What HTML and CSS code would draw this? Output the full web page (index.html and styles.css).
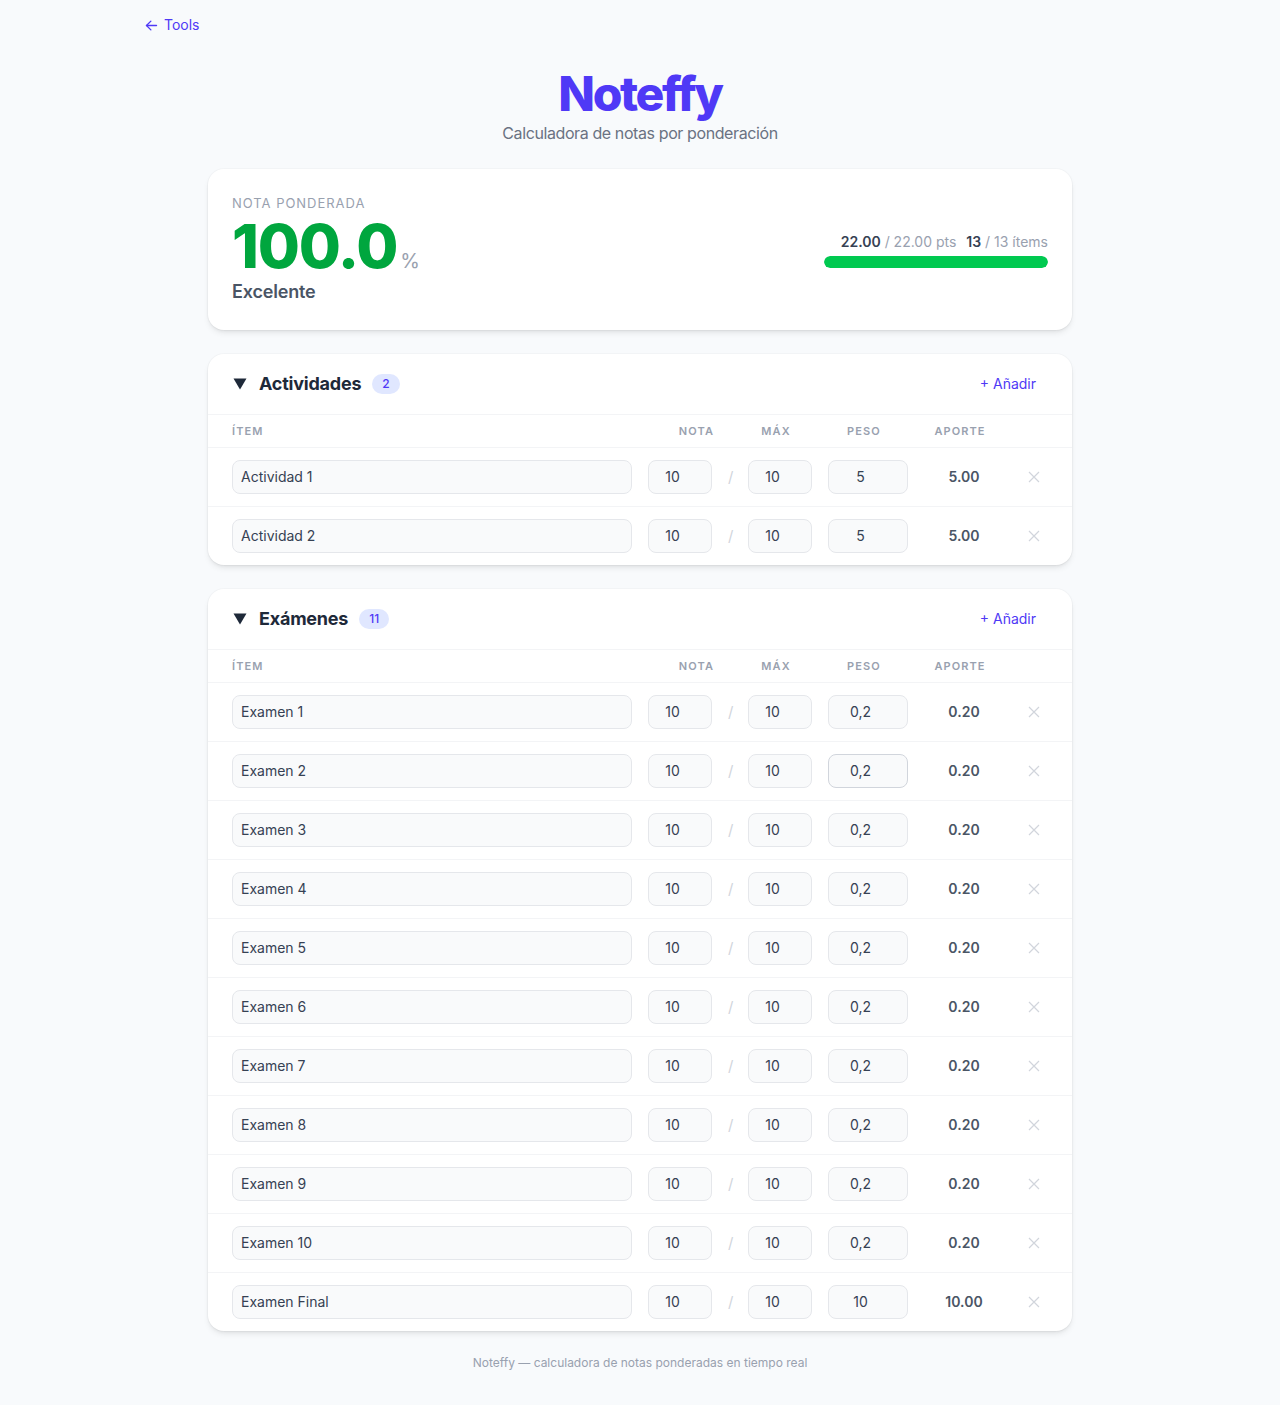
FILE: index.html
```html
<!DOCTYPE html>
<html lang="es">
<head>
    <meta charset="UTF-8">
    <meta name="viewport" content="width=device-width, initial-scale=1.0">
    <title>Noteffy - Calculadora de notas</title>
    <link rel="stylesheet" href="styles.css">
</head>
<body>
    <nav class="top-nav">
        <a href="/" class="back-link">
            <svg width="15" height="15" viewBox="0 0 24 24" fill="none" stroke="currentColor" stroke-width="2.2" stroke-linecap="round" stroke-linejoin="round"><path d="M20 12H4"/><path d="M11 19l-7-7 7-7"/></svg>
            Tools
        </a>
    </nav>

    <main class="app">
        <header class="app-header">
            <h1>Noteffy</h1>
            <p>Calculadora de notas por ponderación</p>
        </header>

        <!-- Resultado global -->
        <section class="card summary">
            <div class="summary-main">
                <div class="summary-label">Nota ponderada</div>
                <div class="summary-score">
                    <span class="score-value">100.0</span>
                    <span class="score-unit">%</span>
                </div>
                <div class="summary-grade">Excelente</div>
            </div>
            <div class="summary-progress">
                <div class="progress-text">
                    <b>22.00</b> / 22.00 pts <span class="gap"></span><b>13</b> / 13 ítems
                </div>
                <div class="progress-track">
                    <div class="progress-fill" style="width: 100%"></div>
                </div>
            </div>
        </section>

        <!-- Actividades -->
        <section class="card group">
            <div class="group-head">
                <button class="group-toggle">
                    <svg class="caret" width="14" height="12" viewBox="0 0 14 12"><path d="M0.5 0.5h13L7 11.5z" fill="currentColor"/></svg>
                    <h2>Actividades</h2>
                    <span class="badge">2</span>
                </button>
                <button class="add-btn">+ Añadir</button>
            </div>
            <div class="row row-head">
                <span class="col-name">Ítem</span>
                <span class="col-num col-nota">Nota</span>
                <span class="col-slash"></span>
                <span class="col-num">Máx</span>
                <span class="col-peso">Peso</span>
                <span class="col-aporte">Aporte</span>
                <span class="col-del"></span>
            </div>
            <div class="row">
                <input class="field col-name" value="Actividad 1">
                <input class="field num col-num" value="10">
                <span class="col-slash">/</span>
                <input class="field num col-num" value="10">
                <input class="field num col-peso" value="5">
                <span class="col-aporte value">5.00</span>
                <button class="col-del remove"><svg width="12" height="12" viewBox="0 0 12 12"><path d="M1 1l10 10M11 1L1 11" stroke="currentColor" stroke-width="1.2"/></svg></button>
            </div>
            <div class="row">
                <input class="field col-name" value="Actividad 2">
                <input class="field num col-num" value="10">
                <span class="col-slash">/</span>
                <input class="field num col-num" value="10">
                <input class="field num col-peso" value="5">
                <span class="col-aporte value">5.00</span>
                <button class="col-del remove"><svg width="12" height="12" viewBox="0 0 12 12"><path d="M1 1l10 10M11 1L1 11" stroke="currentColor" stroke-width="1.2"/></svg></button>
            </div>
        </section>

        <!-- Exámenes -->
        <section class="card group">
            <div class="group-head">
                <button class="group-toggle">
                    <svg class="caret" width="14" height="12" viewBox="0 0 14 12"><path d="M0.5 0.5h13L7 11.5z" fill="currentColor"/></svg>
                    <h2>Exámenes</h2>
                    <span class="badge">11</span>
                </button>
                <button class="add-btn">+ Añadir</button>
            </div>
            <div class="row row-head">
                <span class="col-name">Ítem</span>
                <span class="col-num col-nota">Nota</span>
                <span class="col-slash"></span>
                <span class="col-num">Máx</span>
                <span class="col-peso">Peso</span>
                <span class="col-aporte">Aporte</span>
                <span class="col-del"></span>
            </div>
            <div class="row">
                <input class="field col-name" value="Examen 1">
                <input class="field num col-num" value="10">
                <span class="col-slash">/</span>
                <input class="field num col-num" value="10">
                <input class="field num col-peso" value="0,2">
                <span class="col-aporte value">0.20</span>
                <button class="col-del remove"><svg width="12" height="12" viewBox="0 0 12 12"><path d="M1 1l10 10M11 1L1 11" stroke="currentColor" stroke-width="1.2"/></svg></button>
            </div>
            <div class="row">
                <input class="field col-name" value="Examen 2">
                <input class="field num col-num" value="10">
                <span class="col-slash">/</span>
                <input class="field num col-num" value="10">
                <input class="field num col-peso hovered" value="0,2">
                <span class="col-aporte value">0.20</span>
                <button class="col-del remove"><svg width="12" height="12" viewBox="0 0 12 12"><path d="M1 1l10 10M11 1L1 11" stroke="currentColor" stroke-width="1.2"/></svg></button>
            </div>
            <div class="row">
                <input class="field col-name" value="Examen 3">
                <input class="field num col-num" value="10">
                <span class="col-slash">/</span>
                <input class="field num col-num" value="10">
                <input class="field num col-peso" value="0,2">
                <span class="col-aporte value">0.20</span>
                <button class="col-del remove"><svg width="12" height="12" viewBox="0 0 12 12"><path d="M1 1l10 10M11 1L1 11" stroke="currentColor" stroke-width="1.2"/></svg></button>
            </div>
            <div class="row">
                <input class="field col-name" value="Examen 4">
                <input class="field num col-num" value="10">
                <span class="col-slash">/</span>
                <input class="field num col-num" value="10">
                <input class="field num col-peso" value="0,2">
                <span class="col-aporte value">0.20</span>
                <button class="col-del remove"><svg width="12" height="12" viewBox="0 0 12 12"><path d="M1 1l10 10M11 1L1 11" stroke="currentColor" stroke-width="1.2"/></svg></button>
            </div>
            <div class="row">
                <input class="field col-name" value="Examen 5">
                <input class="field num col-num" value="10">
                <span class="col-slash">/</span>
                <input class="field num col-num" value="10">
                <input class="field num col-peso" value="0,2">
                <span class="col-aporte value">0.20</span>
                <button class="col-del remove"><svg width="12" height="12" viewBox="0 0 12 12"><path d="M1 1l10 10M11 1L1 11" stroke="currentColor" stroke-width="1.2"/></svg></button>
            </div>
            <div class="row">
                <input class="field col-name" value="Examen 6">
                <input class="field num col-num" value="10">
                <span class="col-slash">/</span>
                <input class="field num col-num" value="10">
                <input class="field num col-peso" value="0,2">
                <span class="col-aporte value">0.20</span>
                <button class="col-del remove"><svg width="12" height="12" viewBox="0 0 12 12"><path d="M1 1l10 10M11 1L1 11" stroke="currentColor" stroke-width="1.2"/></svg></button>
            </div>
            <div class="row">
                <input class="field col-name" value="Examen 7">
                <input class="field num col-num" value="10">
                <span class="col-slash">/</span>
                <input class="field num col-num" value="10">
                <input class="field num col-peso" value="0,2">
                <span class="col-aporte value">0.20</span>
                <button class="col-del remove"><svg width="12" height="12" viewBox="0 0 12 12"><path d="M1 1l10 10M11 1L1 11" stroke="currentColor" stroke-width="1.2"/></svg></button>
            </div>
            <div class="row">
                <input class="field col-name" value="Examen 8">
                <input class="field num col-num" value="10">
                <span class="col-slash">/</span>
                <input class="field num col-num" value="10">
                <input class="field num col-peso" value="0,2">
                <span class="col-aporte value">0.20</span>
                <button class="col-del remove"><svg width="12" height="12" viewBox="0 0 12 12"><path d="M1 1l10 10M11 1L1 11" stroke="currentColor" stroke-width="1.2"/></svg></button>
            </div>
            <div class="row">
                <input class="field col-name" value="Examen 9">
                <input class="field num col-num" value="10">
                <span class="col-slash">/</span>
                <input class="field num col-num" value="10">
                <input class="field num col-peso" value="0,2">
                <span class="col-aporte value">0.20</span>
                <button class="col-del remove"><svg width="12" height="12" viewBox="0 0 12 12"><path d="M1 1l10 10M11 1L1 11" stroke="currentColor" stroke-width="1.2"/></svg></button>
            </div>
            <div class="row">
                <input class="field col-name" value="Examen 10">
                <input class="field num col-num" value="10">
                <span class="col-slash">/</span>
                <input class="field num col-num" value="10">
                <input class="field num col-peso" value="0,2">
                <span class="col-aporte value">0.20</span>
                <button class="col-del remove"><svg width="12" height="12" viewBox="0 0 12 12"><path d="M1 1l10 10M11 1L1 11" stroke="currentColor" stroke-width="1.2"/></svg></button>
            </div>
            <div class="row">
                <input class="field col-name" value="Examen Final">
                <input class="field num col-num" value="10">
                <span class="col-slash">/</span>
                <input class="field num col-num" value="10">
                <input class="field num col-peso" value="10">
                <span class="col-aporte value">10.00</span>
                <button class="col-del remove"><svg width="12" height="12" viewBox="0 0 12 12"><path d="M1 1l10 10M11 1L1 11" stroke="currentColor" stroke-width="1.2"/></svg></button>
            </div>
        </section>

        <footer class="app-footer">
            Noteffy — calculadora de notas ponderadas en tiempo real
        </footer>
    </main>
</body>
</html>
```

FILE: styles.css
```css
* {
    margin: 0;
    padding: 0;
    box-sizing: border-box;
}

body {
    font-family: Inter, "Noto Sans", "Liberation Sans", sans-serif;
    background: #f8fafc;
    color: #1e2939;
    min-height: 100vh;
}

button,
input {
    font: inherit;
    color: inherit;
    background: none;
    border: none;
}

/* Top navigation */
.top-nav {
    max-width: 1024px;
    margin: 0 auto;
    padding: 15px 16px 0;
}

.back-link {
    display: inline-flex;
    align-items: center;
    gap: 5px;
    font-size: 14px;
    line-height: 20px;
    color: #4f39f6;
    text-decoration: none;
}

/* Main column */
.app {
    max-width: 864px;
    margin: 0 auto;
}

.app-header {
    text-align: center;
    margin: 33px 0 24px;
}

.app-header h1 {
    font-size: 48px;
    line-height: 48px;
    font-weight: 800;
    letter-spacing: -0.05em;
    color: #4f39f6;
}

.app-header p {
    margin-top: 3px;
    font-size: 16px;
    line-height: 24px;
    letter-spacing: -0.025em;
    color: #6a7282;
}

.card {
    background: #fff;
    border-radius: 16px;
    box-shadow: 0 0 0 1px rgba(0, 0, 0, 0.025), 0 4px 6px -1px rgba(0, 0, 0, 0.08), 0 2px 4px -2px rgba(0, 0, 0, 0.08);
    margin-bottom: 24px;
    overflow: hidden;
}

/* Summary */
.summary {
    display: flex;
    align-items: center;
    justify-content: space-between;
    padding: 25px 24px 24px;
}

.summary-label {
    font-size: 13px;
    line-height: 18px;
    letter-spacing: 0.075em;
    text-transform: uppercase;
    color: #99a1af;
}

.summary-score {
    display: flex;
    align-items: baseline;
    margin-top: 4px;
}

.score-value {
    font-size: 61px;
    line-height: 60px;
    font-weight: 800;
    letter-spacing: -0.02em;
    color: #00a63e;
}

.score-unit {
    margin-left: 3px;
    font-size: 20px;
    line-height: 20px;
    color: #99a1af;
}

.summary-grade {
    margin-top: 2px;
    font-size: 18px;
    line-height: 28px;
    font-weight: 600;
    letter-spacing: -0.01em;
    color: #4a5565;
}

.summary-progress {
    width: 224px;
}

.progress-text {
    font-size: 14px;
    line-height: 20px;
    text-align: right;
    color: #99a1af;
    white-space: nowrap;
}

.progress-text b {
    font-weight: 600;
    color: #364153;
}

.progress-text .gap {
    display: inline-block;
    width: 6px;
}

.progress-track {
    margin-top: 4px;
    height: 12px;
    border-radius: 999px;
    background: #f3f4f6;
    overflow: hidden;
}

.progress-fill {
    height: 100%;
    border-radius: 999px;
    background: #00c950;
}

/* Groups */
.group-head {
    display: flex;
    align-items: center;
    justify-content: space-between;
    padding: 16px 24px;
    border-bottom: 1px solid #f3f4f6;
}

.group-toggle {
    display: flex;
    align-items: center;
    cursor: pointer;
}

.caret {
    margin: 0 12px 0 1px;
    color: #1e2939;
}

.group-toggle h2 {
    font-size: 18px;
    line-height: 28px;
    font-weight: 700;
    letter-spacing: -0.012em;
    color: #1e2939;
}

.badge {
    margin-left: 11px;
    padding: 0 10px;
    height: 20px;
    line-height: 20px;
    border-radius: 999px;
    background: #e0e7ff;
    color: #4f39f6;
    font-size: 12px;
    font-weight: 500;
}

.add-btn {
    padding: 4px 12px;
    font-size: 14px;
    line-height: 20px;
    color: #4f39f6;
    cursor: pointer;
    border-radius: 8px;
}

/* Rows */
.row {
    display: flex;
    align-items: center;
    gap: 16px;
    padding: 12px 24px;
    border-bottom: 1px solid #f3f4f6;
}

.row:last-child {
    border-bottom: none;
}

.row-head {
    height: 33px;
    padding-top: 0;
    padding-bottom: 0;
    font-size: 11px;
    font-weight: 600;
    letter-spacing: 0.1em;
    text-transform: uppercase;
    color: #99a1af;
}

.col-name { flex: 1; min-width: 0; }
.col-num { width: 64px; flex-shrink: 0; }
.col-slash { width: 4px; flex-shrink: 0; text-align: center; }
.col-peso { width: 80px; flex-shrink: 0; }
.col-aporte { width: 80px; flex-shrink: 0; text-align: center; }
.col-del { width: 28px; flex-shrink: 0; }

.row-head .col-num,
.row-head .col-peso,
.row-head .col-aporte {
    text-align: center;
    padding-right: 8px;
}

.row-head .col-nota {
    text-align: right;
    padding-right: 0;
    margin-right: -2px;
}

.field {
    height: 34px;
    padding: 0 8px;
    font-size: 14px;
    color: #364153;
    background: #f9fafb;
    border: 1px solid #e5e7eb;
    border-radius: 8px;
    outline: none;
}

.field.num {
    text-align: center;
    padding-right: 23px;
}

.field.hovered {
    border-color: #d1d5dc;
}

.col-slash {
    font-size: 15px;
    color: #d1d5dc;
}

.value {
    font-size: 14px;
    font-weight: 600;
    color: #4a5565;
}

.remove {
    display: flex;
    align-items: center;
    justify-content: center;
    height: 28px;
    color: #d1d5dc;
    cursor: pointer;
}

.app-footer {
    padding: 0 0 34px;
    text-align: center;
    font-size: 12px;
    line-height: 16px;
    color: #99a1af;
}
```
